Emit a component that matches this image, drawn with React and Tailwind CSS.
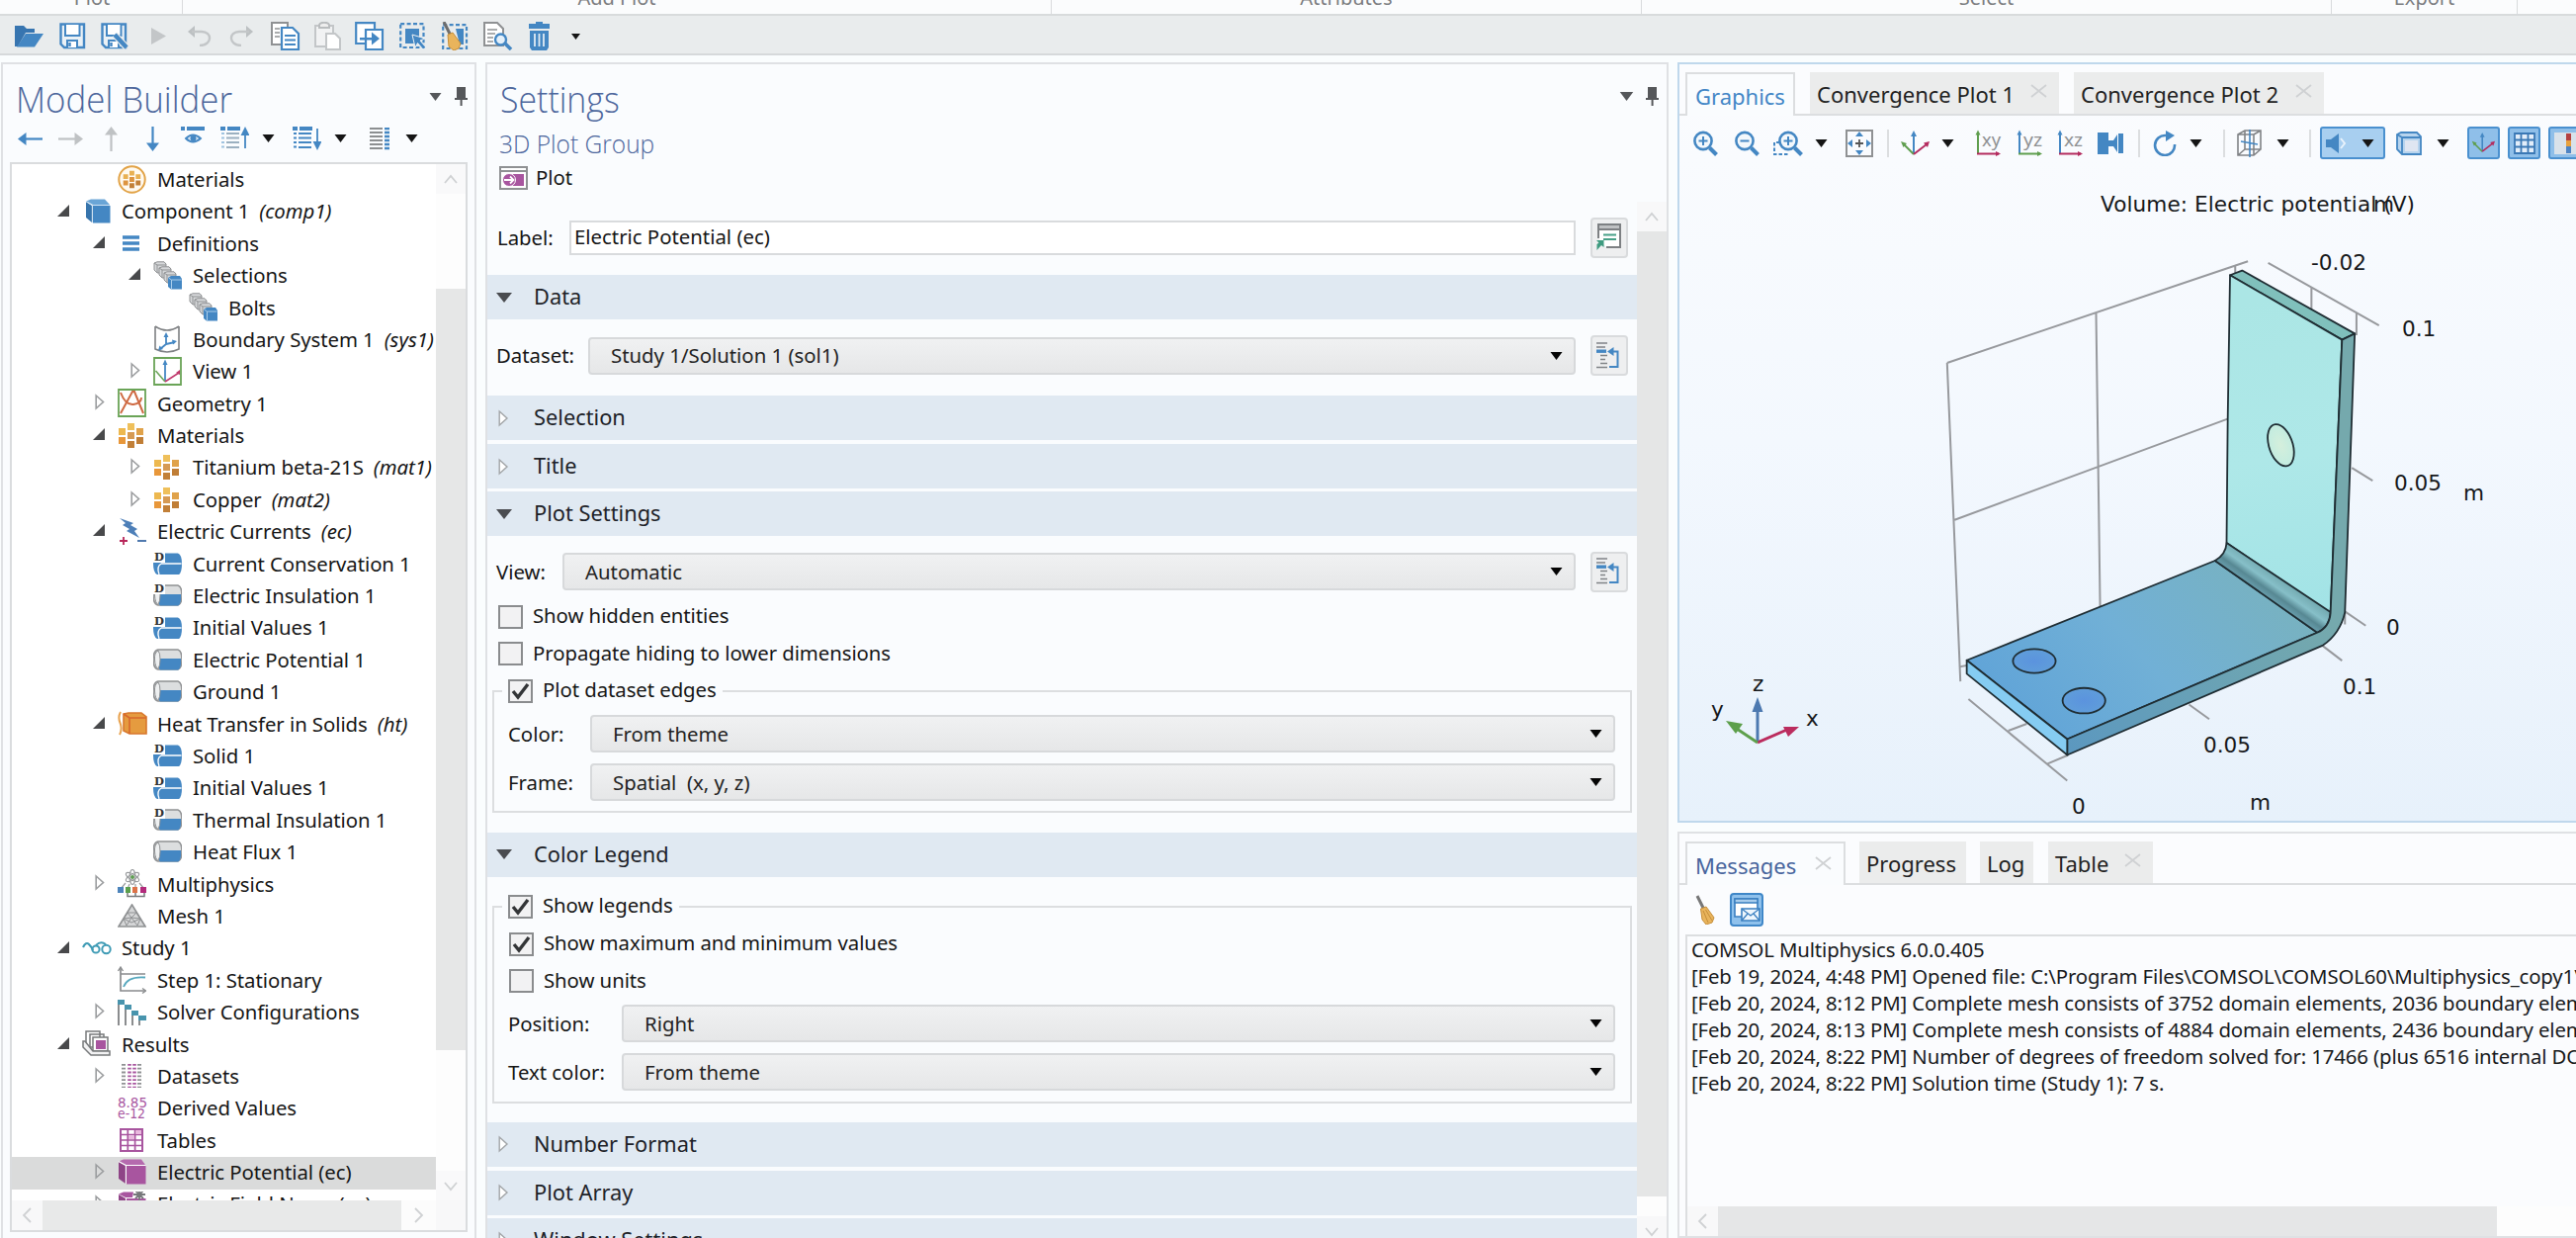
import React from "react";

const BLUE = "#4487c3";
const GRAY = "#8f9193";
const PURPLE = "#a8559f";

/* ---------- drawing helpers ---------- */

function Ic({ w, h = w, vw = w, vh = h, children, className = "" }) {
  return (
    <svg
      width={w}
      height={h}
      viewBox={`0 0 ${vw} ${vh}`}
      fill="none"
      className={"block shrink-0 " + className}
    >
      {children}
    </svg>
  );
}

function Caret({ className = "", w = 13, h = 8, color = "#151515" }) {
  return (
    <Ic w={w} h={h} vw={12} vh={8} className={className}>
      <path d="M0 0H12L6 8Z" fill={color} />
    </Ic>
  );
}

function Pin() {
  return (
    <Ic w={13} h={19}>
      <path d="M2 0H11V11H13V13H7.6V19H5.6V13H0V11H2Z" fill="#55575a" />
    </Ic>
  );
}

function Broom({ w = 20, h = 30 }) {
  return (
    <Ic w={w} h={h} vw={20} vh={30}>
      <path d="M2 1L9 15" stroke="#777" strokeWidth="3" />
      <path d="M5.5 14L11 12L19 23L17 28L11 30L7 25Z" fill="#e9b45c" stroke="#c58e3a" />
      <path d="M8 16L13 28M10.5 15L17 26" stroke="#c58e3a" strokeWidth="1" />
    </Ic>
  );
}

/* ---------- top toolbar ---------- */

const Floppy = ({ pen }) => (
  <Ic w={28} h={27}>
    <path d="M1.5 1.5H25V25H5L1.5 21.5Z" stroke={BLUE} strokeWidth="2.4" fill="#eaf1f6" />
    <path d="M6 2V13H20.5V2" stroke={BLUE} strokeWidth="2" fill="#fff" />
    <path d="M8 25V18H18V25" stroke={BLUE} strokeWidth="2" fill="#fff" />
    <path d="M10.5 20V24" stroke={BLUE} strokeWidth="2.5" />
    {pen && <path d="M14 12L26 25" stroke="#e9ecec" strokeWidth="7" />}
    {pen && <path d="M14 12L26 25" stroke={BLUE} strokeWidth="4.5" />}
  </Ic>
);

const MAIN_TOOLS = [
  ["w-[45px]", <Ic w={29} h={23}><path d="M0 22V1H9L12 4H20V8H11L3 22Z" fill="#3775b0" /><path d="M11 9H29L20 22.5H2Z" fill={BLUE} /></Ic>],
  ["w-[42px]", <Floppy />],
  ["w-[51px]", <Floppy pen />],
  ["w-[36px]", <Ic w={15} h={17}><path d="M0 0L15 8.5L0 17Z" fill="#c3c6c8" /></Ic>],
  ["w-[43px]", <Ic w={25} h={21}><path d="M8 0L1 6L8 12" fill="#bcc0c2" /><path d="M5 6H15C26 6 26 20 13 20" stroke="#c3c6c8" strokeWidth="2.4" /></Ic>],
  ["w-[42px]", <Ic w={25} h={21}><path d="M17 0L24 6L17 12" fill="#bcc0c2" /><path d="M20 6H10C-1 6 -1 20 12 20" stroke="#c3c6c8" strokeWidth="2.4" /></Ic>],
  ["w-[44px]", <Ic w={30} h={29}>
    <path d="M1 1H17V23H1Z" stroke={GRAY} strokeWidth="2" fill="#fff" />
    <path d="M4 7H9M4 11H9M4 15H9" stroke={GRAY} strokeWidth="1.6" />
    <path d="M11 6H22L28 12V28H11Z" stroke={BLUE} strokeWidth="2.2" fill="#fff" />
    <path d="M14 14H25M14 18.5H25M14 23H25" stroke={BLUE} strokeWidth="2" />
  </Ic>],
  ["w-[41px]", <Ic w={28} h={29}>
    <path d="M1 4H19V25H1Z" stroke="#c3c6c8" strokeWidth="2" fill="#f1f2f3" />
    <path d="M5 6V3C6 0 14 0 15 3V6Z" stroke="#b9bcbe" strokeWidth="2" fill="#eee" />
    <path d="M12 12H21L26 17V28H12Z" stroke="#c3c6c8" strokeWidth="2" fill="#fff" />
  </Ic>],
  ["w-[45px]", <Ic w={30} h={29}>
    <path d="M1.2 1.2H20V22H1.2Z" stroke={BLUE} strokeWidth="2.2" fill="#fff" />
    <path d="M11 8H28V28H11Z" stroke={BLUE} strokeWidth="2.2" fill="#fff" />
    <path d="M5 16H17V10.5L25 17L17 23.5V18.5H5Z" fill={BLUE} />
  </Ic>],
  ["w-[43px]", <Ic w={27} h={27}>
    <path d="M1.2 1.2H24.5V25H1.2Z" stroke={BLUE} strokeWidth="2.2" strokeDasharray="4 2.4" />
    <path d="M6 6H20V21H6Z" fill={BLUE} />
    <path d="M13 12L26 16L21 18L27 25L24 27L18.5 20.5L16 25Z" fill={BLUE} stroke="#eef2f4" />
  </Ic>],
  ["w-[42px]", <Ic w={27} h={29}>
    <path d="M1.2 3.2H25V27H1.2Z" stroke={BLUE} strokeWidth="2.2" strokeDasharray="4 2.4" />
    <path d="M14 7H22V23H18Z" fill={BLUE} />
    <path d="M2 0L9 14" stroke="#6d6d6d" strokeWidth="3" />
    <path d="M6 13L11 11L19 22L17 27L12 29L7 25Z" fill="#e9b45c" stroke="#c58e3a" />
  </Ic>],
  ["w-[46px]", <Ic w={30} h={29}>
    <path d="M1 1H14L20 7V24H1Z" stroke={GRAY} strokeWidth="2" fill="#fff" />
    <path d="M4 8H14M4 12H12M4 16H10M4 20H10" stroke={GRAY} strokeWidth="1.6" />
    <circle cx="17.5" cy="18" r="5.5" stroke={BLUE} strokeWidth="2.4" fill="#e4f0fa" />
    <path d="M22 22L28 28" stroke={BLUE} strokeWidth="3.6" />
  </Ic>],
  ["w-[43px]", <Ic w={21} h={29}>
    <path d="M0 2H7V0H14V2H21V7H0Z" fill={BLUE} />
    <path d="M1 9H20V26L18 29H3L1 26Z" fill={BLUE} />
    <path d="M6 12V25M10.5 12V25M15 12V25" stroke="#dfeaf3" strokeWidth="1.8" />
  </Ic>],
  ["w-[20px]", <Caret w={9} h={6} />],
];

const RIBBON = [
  ["w-[183px]", "Plot"],
  ["w-[879px]", "Add Plot"],
  ["w-[597px]", "Attributes"],
  ["w-[698px]", "Select"],
  ["w-[188px]", "Export"],
];

function Ribbon() {
  return (
    <div className="flex h-[16px] shrink-0 items-end border-b-2 border-[#d8dbdc] bg-[#fbfcfd] pl-[2px]">
      {RIBBON.map(([w, t]) => (
        <div key={t} className={"relative flex h-full justify-center border-r border-[#d9dbdd] " + w}>
          <span className="absolute -top-[16px] text-[20px] leading-[28px] text-[#7b7d80]">{t}</span>
        </div>
      ))}
    </div>
  );
}

/* ---------- model tree ---------- */

function Cyl({ d, half }) {
  return (
    <Ic w={29} h={24}>
      {half ? (
        <>
          <path d="M5 2H25Q29 3 29 12Q29 21 25 22H5Q0 21 0 12Q0 3 5 2Z" fill="#dcdedf" stroke={GRAY} strokeWidth="1.6" />
          <path d="M6 11H28V17Q27 22 25 22.5H7Q4 20 6 11Z" fill={BLUE} />
          <path d="M5 3Q1 5 1.5 12Q2 20 5 21.5Q7 18 7 12Q7 5 5 3Z" fill="#eef0f1" stroke={GRAY} strokeWidth="1" />
        </>
      ) : (
        <>
          <path d="M5 1.5H25Q29 3 29 12Q29 21 26 23H4Q0 21 0 12Q0 3 5 1.5Z" fill={BLUE} />
          <path d="M8 12H28.5M8 12Q3 15 6 23" stroke="#fff" strokeWidth="1.3" />
        </>
      )}
      {d && (
        <>
          <path d="M0 0H12V11H0Z" fill="#fff" />
          <text x="1" y="9" fontSize="11.5" fontWeight="bold" fill="#333" className="font-['DejaVu_Serif',serif]">D</text>
        </>
      )}
    </Ic>
  );
}

const Cubelet = ({ fill, side, top }) => (
  <Ic w={29} h={26}>
    <path d="M1 3L8 7V25L1 20Z" fill={side} />
    <path d="M1 2.5L6 0.5H24L28 6H8Z" fill={top} />
    <path d="M9 7H28.5V25.5H9Z" fill={fill} />
    <path d="M8.4 25V6.5H28.4M8.4 6.5L1 2.6" stroke="#fff" strokeWidth="1.1" />
  </Ic>
);

function MatBlocks({ s = 27 }) {
  return (
    <Ic w={s} h={s} vw={27} vh={27}>
      <path d="M10 1H17V8H10Z" fill="#efc05b" />
      <path d="M1 6H8V13H1Z" fill="#edb84f" />
      <path d="M19 6H26V13H19Z" fill="#e0a24a" />
      <path d="M10 10H17V17H10Z" fill="#d69a53" />
      <path d="M1 15H8V22H1Z" fill="#e8973a" />
      <path d="M19 15H26V22H19Z" fill="#c07e36" />
      <path d="M10 19H17V26H10Z" fill="#c28038" />
    </Ic>
  );
}

const SelBoxes = () => (
  <Ic w={29} h={29}>
    {[[0, 0], [5, 5], [10, 10]].map(([x, y]) => (
      <g key={x} transform={`translate(${x} ${y})`}>
        <path d="M1 2L4 0.8H11L13 3V12H4L1 9Z" fill="#d6d8da" stroke={GRAY} strokeWidth="1" />
        <path d="M4 12V4H13M4 4L1 2" stroke={GRAY} strokeWidth="1" />
      </g>
    ))}
    <path d="M15 17L18 15H27L29 18V28.5H18L15 26Z" fill={BLUE} />
    <path d="M18.5 28V19H28.6M18.5 19L15.5 17" stroke="#a9cdea" strokeWidth="1" />
  </Ic>
);

const ICONS = {
  matCircle: (
    <Ic w={29} h={29}>
      <circle cx="14.5" cy="14.5" r="13.2" stroke="#e2a347" strokeWidth="2" fill="#fffaf1" />
      <g transform="translate(5 5) scale(.7)">
        <path d="M10 1H17V8H10ZM1 6H8V13H1ZM19 6H26V13H19Z" fill="#e8b052" />
        <path d="M10 10H17V17H10ZM1 15H8V22H1Z" fill="#dd9440" />
        <path d="M19 15H26V22H19ZM10 19H17V26H10Z" fill="#c28038" />
      </g>
    </Ic>
  ),
  comp: (
    <Ic w={26} h={25} className="ml-[3px]">
      <path d="M1 3L7 7V24L1 19Z" fill="#3674ac" />
      <path d="M1 2.5L6 0.5H20L25 6H8Z" fill="#6aa5d6" />
      <path d="M8 7H25.5V24.5H8Z" fill={BLUE} />
      <path d="M7.4 24V6.5H25M7.4 6.5L1 2.6" stroke="#cfe2f2" strokeWidth="1.1" />
    </Ic>
  ),
  defs: <Ic w={17} h={16} className="ml-[5px]"><path d="M0 2H17M0 8H17M0 14H17" stroke={BLUE} strokeWidth="3.6" /></Ic>,
  sel: <SelBoxes />,
  bsys: (
    <Ic w={28} h={28}>
      <path d="M2 1V24Q14 30 26 24V1M2 1Q14 9 26 1" stroke="#7e8083" strokeWidth="1.6" />
      <path d="M13 9V19L7 24M13 19L22 17" stroke={BLUE} strokeWidth="1.8" />
      <path d="M13 7L10.5 12H15.5ZM24 16L19 14.5L20 19.5ZM5 25.5L6.5 20.5L10 24Z" fill={BLUE} />
    </Ic>
  ),
  view: (
    <Ic w={29} h={29}>
      <path d="M1 1H28V28H1Z" stroke="#6aa457" strokeWidth="1.8" />
      <path d="M12 5V25" stroke={BLUE} strokeWidth="1.8" /><path d="M12 2.5L9.5 8H14.5Z" fill={BLUE} />
      <path d="M12 25L2.5 14" stroke="#6aa457" strokeWidth="1.5" />
      <path d="M12 25L26 16" stroke="#c0386c" strokeWidth="1.5" /><path d="M27 13V18L23 16Z" fill="#c0386c" />
    </Ic>
  ),
  geo: (
    <Ic w={29} h={29}>
      <path d="M1 1H28V28H1Z" stroke="#6aa457" strokeWidth="1.8" />
      <path d="M3 25L15 3H17L26 25M3 4Q8 17 16 16T24 9" stroke="#cf6a43" strokeWidth="2" />
    </Ic>
  ),
  mat: <MatBlocks />,
  ec: (
    <Ic w={29} h={28}>
      <path d="M2 1L16 6L13 8L20 12L17 14L22 21L9 14L12 12L5 8L8 6Z" fill="#4d7fb8" />
      <path d="M2 24H10M6 20V28" stroke="#b8275a" strokeWidth="1.8" />
      <path d="M20 24H29" stroke="#3d6aa5" strokeWidth="1.8" />
    </Ic>
  ),
  dFull: <Cyl d />,
  dHalf: <Cyl d half />,
  half: <Cyl half />,
  heat: (
    <Ic w={30} h={26}>
      <path d="M3 1Q0 6 2.5 12T2 24" stroke="#e8a24e" strokeWidth="2" />
      <path d="M6 3L11 2H24L29 6V23H12L6 20Z" fill="#e59b3f" stroke="#d8772c" strokeWidth="1.6" />
      <path d="M12 23V7H29M12 7L6 3" stroke="#d8672c" strokeWidth="1.6" />
    </Ic>
  ),
  multi: (
    <Ic w={29} h={29}>
      <g stroke="#9a9c9e" strokeWidth="1.2">
        <ellipse cx="15" cy="8" rx="3" ry="7.5" />
        <ellipse cx="15" cy="8" rx="3" ry="7.5" transform="rotate(60 15 8)" />
        <ellipse cx="15" cy="8" rx="3" ry="7.5" transform="rotate(120 15 8)" />
        <path d="M8 14L3 20M12 15L10 20M18 15L18 20M22 14L27 20" />
        <path d="M10 24V27.5H27V24M18 24V27" stroke="#77797b" strokeWidth="1.5" />
      </g>
      <circle cx="15" cy="8" r="2" fill="#5e9c51" />
      <path d="M0 18H6V24H0Z" fill="#4d84bb" />
      <path d="M8 18H13V24H8Z" fill="#5b9f4c" />
      <path d="M15 18H20V24H15Z" fill="#dd7348" />
      <path d="M23 18H29V24H23Z" fill="#b32a7c" />
    </Ic>
  ),
  mesh: (
    <Ic w={29} h={24}>
      <path d="M14.5 1L28 23H1Z" fill="#d5d6d7" stroke={GRAY} strokeWidth="1.6" />
      <path d="M10 9L19 9L14 14ZM6 15L14 14L23 15L20 22L14 14L9 22ZM10 9L6 15L14 19L23 15L19 9" stroke={GRAY} strokeWidth="1" />
    </Ic>
  ),
  study: (
    <Ic w={30} h={15}>
      <path d="M1 7Q4 1 7 4T11 10" stroke="#3f9bb5" strokeWidth="2.2" />
      <circle cx="14" cy="9" r="3.6" stroke="#3f9bb5" strokeWidth="2" />
      <circle cx="24.5" cy="9" r="4.2" stroke="#3f9bb5" strokeWidth="2" />
      <path d="M14 5Q19 0 24 4" stroke="#3f9bb5" strokeWidth="1.8" />
    </Ic>
  ),
  step: (
    <Ic w={29} h={28}>
      <path d="M3 2V25H28M3 8H28" stroke="#898b8d" strokeWidth="1.7" />
      <path d="M0.5 5L3 1L5.5 5M25 22.5L28.5 25L25 27.5" stroke="#898b8d" strokeWidth="1.3" />
      <path d="M6 21Q10 10 28 11.5" stroke="#57a8be" strokeWidth="1.8" />
    </Ic>
  ),
  solver: (
    <Ic w={29} h={27}>
      <path d="M1 2V27M8 6V27M15 12V27M22 17V27" stroke="#77797b" strokeWidth="1.7" />
      <path d="M0 1H7V6H0ZM7 6H14V11H7ZM14 12H21V17H14ZM21 17H29V22H21Z" fill="#4894ad" />
    </Ic>
  ),
  results: (
    <Ic w={29} h={27}>
      <path d="M4 1H18V17H4ZM8 4H22V20H8Z" stroke="#77797b" strokeWidth="1.5" fill="#fff" />
      <path d="M11 7H26V21H11Z" stroke="#77797b" strokeWidth="1.5" fill="#fff" />
      <path d="M14 10H24V19H14Z" fill={PURPLE} />
      <path d="M1 11V17L9 25H28V21H11L3 11Z" fill="#f2f2f3" stroke="#77797b" strokeWidth="1.5" />
    </Ic>
  ),
  datasets: (
    <Ic w={21} h={24} className="ml-[4px]">
      <path d="M2 0V24M18 0V24" stroke={GRAY} strokeWidth="4" strokeDasharray="1.8 2" />
      <path d="M8 0V24M13 0V24" stroke={PURPLE} strokeWidth="3.6" strokeDasharray="1.8 2" />
    </Ic>
  ),
  derived: (
    <Ic w={30} h={24}>
      <text x="0" y="10.5" fontSize="13.5" textLength="30" lengthAdjust="spacingAndGlyphs" fill={PURPLE} className="font-['DejaVu_Sans',sans-serif]">8.85</text>
      <text x="0" y="22" fontSize="13.5" textLength="28" lengthAdjust="spacingAndGlyphs" fill={PURPLE} className="font-['DejaVu_Sans',sans-serif]">e-12</text>
    </Ic>
  ),
  tables: (
    <Ic w={24} h={24} className="ml-[2px]">
      <path d="M1 1H23V23H1Z" fill="#fff" stroke={PURPLE} strokeWidth="2" />
      <path d="M1 6.5H23M1 12H23M1 17.5H23M8.3 1V23M15.6 1V23" stroke={PURPLE} strokeWidth="1.7" />
      <path d="M16.5 2H22V6H16.5ZM9 7.5H15V11H9Z" fill="#e9b8de" />
    </Ic>
  ),
  plotCube: <Cubelet fill={PURPLE} side="#8f4487" top="#b56aae" />,
  plotCubeStar: (
    <Ic w={29} h={26}>
      <path d="M1 3L8 7V25L1 20Z" fill="#8f4487" />
      <path d="M1 2.5L6 0.5H16L15 6H8Z" fill={PURPLE} />
      <path d="M9 7H28.5V25.5H9Z" fill={PURPLE} />
      <path d="M22 -3V9M16 3H28M18 -1L26 7M26 -1L18 7" stroke="#77797b" strokeWidth="1.8" />
    </Ic>
  ),
};

// [level, open state ("o" open, "c" closed, "" leaf), icon, label, tag]
const TREE = [
  [2, "", "matCircle", "Materials"],
  [1, "o", "comp", "Component 1", "(comp1)"],
  [2, "o", "defs", "Definitions"],
  [3, "o", "sel", "Selections"],
  [4, "", "sel", "Bolts"],
  [3, "", "bsys", "Boundary System 1", "(sys1)"],
  [3, "c", "view", "View 1"],
  [2, "c", "geo", "Geometry 1"],
  [2, "o", "mat", "Materials"],
  [3, "c", "mat", "Titanium beta-21S", "(mat1)"],
  [3, "c", "mat", "Copper", "(mat2)"],
  [2, "o", "ec", "Electric Currents", "(ec)"],
  [3, "", "dFull", "Current Conservation 1"],
  [3, "", "dHalf", "Electric Insulation 1"],
  [3, "", "dFull", "Initial Values 1"],
  [3, "", "half", "Electric Potential 1"],
  [3, "", "half", "Ground 1"],
  [2, "o", "heat", "Heat Transfer in Solids", "(ht)"],
  [3, "", "dFull", "Solid 1"],
  [3, "", "dFull", "Initial Values 1"],
  [3, "", "dHalf", "Thermal Insulation 1"],
  [3, "", "half", "Heat Flux 1"],
  [2, "c", "multi", "Multiphysics"],
  [2, "", "mesh", "Mesh 1"],
  [1, "o", "study", "Study 1"],
  [2, "", "step", "Step 1: Stationary"],
  [2, "c", "solver", "Solver Configurations"],
  [1, "o", "results", "Results"],
  [2, "c", "datasets", "Datasets"],
  [2, "", "derived", "Derived Values"],
  [2, "", "tables", "Tables"],
  [2, "c", "plotCube", "Electric Potential (ec)", null, true],
  [2, "c", "plotCubeStar", "Electric Field Norm (ec)"],
];

const INDENT = { 1: "pl-[46px]", 2: "pl-[82px]", 3: "pl-[118px]", 4: "pl-[154px]" };

function TreeRow({ level, state, icon, label, tag, selected }) {
  return (
    <div className={"flex h-[32.4px] shrink-0 items-center pb-[2px] whitespace-nowrap " + INDENT[level] + (selected ? " bg-[#dadbdb]" : "")}>
      <span className="flex w-[12px] shrink-0 justify-end pb-[2px]">
        {state === "o" && <Ic w={12} h={12}><path d="M12 0V12H0Z" fill="#48494b" /></Ic>}
        {state === "c" && <Ic w={10} h={17}><path d="M1.2 2L8.5 8.5L1.2 15Z" stroke="#9b9d9f" strokeWidth="1.6" /></Ic>}
      </span>
      <span className="ml-[13px] flex w-[40px] shrink-0 items-center">{ICONS[icon]}</span>
      <span className="tracking-[-0.06px]">{label}</span>
      {tag && <span className="ml-[10px] italic">{tag}</span>}
    </div>
  );
}

function Chev({ dir }) {
  const d = { up: "M2 9L8 2L14 9", down: "M2 2L8 9L14 2", left: "M9 1L2 8L9 15", right: "M2 1L9 8L2 15" }[dir];
  const v = dir === "up" || dir === "down";
  return <Ic w={v ? 16 : 11} h={v ? 11 : 16}><path d={d} stroke="#cfd1d3" strokeWidth="1.8" /></Ic>;
}

const TreeList = ({ down }) => (
  <Ic w={29} h={24}>
    <path d="M0 2H5M7 2H20" stroke={BLUE} strokeWidth="4" />
    <path d="M1 7H4M1 11.5H4M1 16H4M1 20.5H4" stroke={down ? BLUE : "#9fc3e0"} strokeWidth="2" />
    <path d="M6 7H19M6 11.5H19M6 16H19M6 21H19" stroke={down ? BLUE : "#9bb0c0"} strokeWidth="2" />
    {down ? <path d="M25 2V19M22 16H28L25 22Z" fill={BLUE} stroke={BLUE} strokeWidth="1.8" /> : <path d="M25 22V5M22 8H28L25 2Z" fill={BLUE} stroke={BLUE} strokeWidth="1.8" />}
  </Ic>
);

const HArrow = ({ color, flip }) => (
  <Ic w={25} h={13} className={flip ? "rotate-180" : ""}>
    <path d="M6 6.5H25" stroke={color} strokeWidth="2.2" />
    <path d="M0 6.5L8.5 0V13Z" fill={color} />
  </Ic>
);
const VArrow = ({ color, flip }) => (
  <Ic w={13} h={25} className={flip ? "rotate-180" : ""}>
    <path d="M6.5 6V25" stroke={color} strokeWidth="2.2" />
    <path d="M6.5 0L13 8.5H0Z" fill={color} />
  </Ic>
);

const MB_TOOLS = [
  ["w-[41px]", <HArrow color={BLUE} />],
  ["w-[47px]", <HArrow color="#bfc2c4" flip />],
  ["w-[42px]", <VArrow color="#bfc2c4" />],
  ["w-[35px]", <VArrow color={BLUE} flip />],
  ["w-[40px]", <Ic w={24} h={18} className="-mt-[6px]"><path d="M0 2H4M6 2H24" stroke={BLUE} strokeWidth="4" /><path d="M5 12Q12 5 20 12Q12 19 5 12Z" stroke={BLUE} strokeWidth="1.8" fill="#dbe9f5" /><circle cx="12.5" cy="12" r="3" fill={BLUE} /></Ic>],
  ["w-[42px]", <TreeList />],
  ["w-[31px]", <Caret />],
  ["w-[42px]", <TreeList down />],
  ["w-[36px]", <Caret />],
  ["w-[36px]", <Ic w={20} h={23}><path d="M0 1H13M0 5H13M0 9H13M0 13H13M0 17H13M0 21H13" stroke="#8c8f91" strokeWidth="2.2" /><path d="M15 1H20M15 5H20M15 9H20M15 13H20M15 17H20M15 21H20" stroke={BLUE} strokeWidth="2.4" /></Ic>],
  ["w-[16px]", <Caret />],
];

function ModelBuilder() {
  return (
    <section className="flex w-[481px] shrink-0 flex-col border-2 border-b-0 border-[#dfe1e4] bg-[#fafcfe]">
      <div className="flex h-[60px] items-center pt-[8px] pr-[7px] pl-[13px]">
        <h1 className="w-[340px] origin-left scale-x-[0.942] font-['Open_Sans','Noto_Sans',sans-serif] text-[37px] leading-none font-light whitespace-nowrap text-[#4c669c]">Model Builder</h1>
        <div className="-mt-[3px] ml-auto flex items-center gap-[12px]"><Caret w={15} h={8} color="#55575a" /><Pin /></div>
      </div>
      <div className="flex h-[30px] items-center pl-[15px]">
        {MB_TOOLS.map(([w, n], i) => <span key={i} className={"flex shrink-0 items-center " + w}>{n}</span>)}
      </div>
      <div className="mx-[7px] mt-[9px] flex h-[1082px] flex-col border-2 border-[#dadcde] bg-white">
        <div className="flex min-h-0 flex-1">
          <div className="flex w-[429px] shrink-0 flex-col overflow-hidden">
            {TREE.map(([level, state, icon, label, tag, selected], i) => (
              <TreeRow key={i} {...{ level, state, icon, label, tag, selected }} />
            ))}
          </div>
          <div className="flex flex-1 flex-col bg-[#fdfdfd]">
            <div className="flex h-[30px] items-center justify-center bg-[#f9f9fa]"><Chev dir="up" /></div>
            <div className="mt-[96px] h-[770px] bg-[#e6e7e7]" />
            <div className="mt-auto flex h-[30px] items-center justify-center bg-[#f9f9fa]"><Chev dir="down" /></div>
          </div>
        </div>
        <div className="flex h-[30px] bg-[#f8f8f9]">
          <div className="flex w-[31px] items-center justify-center"><Chev dir="left" /></div>
          <div className="w-[363px] bg-[#e8e9e9]" />
          <div className="flex w-[35px] items-center justify-center bg-[#fcfcfc]"><Chev dir="right" /></div>
        </div>
      </div>
    </section>
  );
}

/* ---------- settings ---------- */

function SectionBar({ open, title, className = "" }) {
  return (
    <div className={"flex h-[45px] shrink-0 items-center bg-[#e0e9f2] pl-[9px] text-[21.8px] text-[#1d2228] " + className}>
      <span className="flex w-[38px]">
        {open
          ? <Ic w={16} h={10}><path d="M0 0H16L8 10Z" fill="#4a4c50" /></Ic>
          : <Ic w={11} h={18} className="ml-[2px]"><path d="M1.2 2L9 9L1.2 16Z" stroke="#a3a6a9" strokeWidth="1.4" fill="#fff" /></Ic>}
      </span>
      {title}
    </div>
  );
}

function Combo({ text, className = "" }) {
  return (
    <div className={"flex h-[38px] shrink-0 items-center justify-between rounded-[4px] border-2 border-[#d7d9db] bg-linear-to-b from-[#f0f1f2] to-[#e6e7e8] pr-[11px] pl-[21px] text-[#222] " + className}>
      <span className="whitespace-pre">{text}</span>
      <Caret color="#050505" w={13} h={8} />
    </div>
  );
}

function Check({ on }) {
  return (
    <span className="flex h-[24px] w-[25px] shrink-0 items-center justify-center border-2 border-[#8a8c8e] bg-[#f2f2f3]">
      {on && <Ic w={19} h={18}><path d="M2 9L7 15L17 2" stroke="#333537" strokeWidth="3.4" /></Ic>}
    </span>
  );
}

function CheckRow({ on, label, className = "" }) {
  return (
    <label className={"flex h-[37.6px] shrink-0 items-center gap-[10px] " + className}>
      <Check on={on} />
      <span className="-mt-[3px] tracking-[-0.06px]">{label}</span>
    </label>
  );
}

function Group({ legend, className, children }) {
  return (
    <fieldset className={"mr-[5px] ml-[5px] shrink-0 border-2 border-[#dcdee0] pr-[15px] pl-[14px] " + className}>
      <legend className="-ml-[6px] flex h-[24px] items-center gap-[10px] pr-[6px] pl-[6px]">
        <Check on />
        <span className="-mt-[3px] tracking-[-0.06px]">{legend}</span>
      </legend>
      {children}
    </fieldset>
  );
}

function SideButton({ kind }) {
  return (
    <button className="ml-[15px] flex h-[41px] w-[38px] shrink-0 items-center justify-center rounded-[4px] border-2 border-[#d9dbdd] bg-[#eeeff0]">
      {kind === "label" ? (
        <Ic w={28} h={28} className="-mt-[4px] -ml-[2px]">
          <path d="M4 16V2H26V25H12" stroke="#7d8083" strokeWidth="2" fill="#fff" />
          <path d="M4 2H26V7H4Z" fill="#bfc1c3" stroke="#7d8083" strokeWidth="2" />
          <path d="M9 12.5H22M9 17H22" stroke="#48a087" strokeWidth="1.9" />
          <path d="M2 18H9.500V25L7 23L2.500 28V22L4.500 20.500Z" fill="#3f9b80" />
        </Ic>
      ) : (
        <Ic w={24} h={28} className="-mt-[2px] -ml-[2px]">
          <path d="M0 2H11M0 6H9M4 14.500H11M4 18.500H9M4 22.500H11M0 26.500H11" stroke="#808386" strokeWidth="1.7" />
          <path d="M0 10.200H10" stroke={BLUE} strokeWidth="3.400" />
          <path d="M14 10.500H21.500V26H13" stroke={BLUE} strokeWidth="2" />
          <path d="M11 10.500L17.500 6V15Z" fill={BLUE} />
        </Ic>
      )}
    </button>
  );
}

function Settings() {
  return (
    <section className="ml-[9px] flex w-[1197px] shrink-0 flex-col border-2 border-b-0 border-[#dfe1e4] bg-[#fafcfe]">
      <div className="flex h-[66px] shrink-0 items-center pt-[2px] pr-[8px] pl-[13px]">
        <h1 className="w-[200px] origin-left scale-x-[0.915] font-['Open_Sans','Noto_Sans',sans-serif] text-[37px] leading-none font-light text-[#4c669c]">Settings</h1>
        <div className="ml-auto flex items-center gap-[12px] pb-[4px]"><Caret w={15} h={9} color="#55575a" /><Pin /></div>
      </div>
      <h2 className="flex h-[29px] w-[300px] shrink-0 origin-left scale-x-[0.925] items-center pl-[13px] font-['Open_Sans','Noto_Sans',sans-serif] text-[26.5px] font-light text-[#4c669c]">3D Plot Group</h2>
      <div className="flex h-[39px] shrink-0 items-center gap-[8px] pl-[12px]">
        <Ic w={29} h={24}>
          <path d="M1 1H28V23H1Z" fill="#fff" stroke={GRAY} strokeWidth="2" />
          <path d="M1 5H28" stroke={GRAY} strokeWidth="2" />
          <path d="M13 8H25V20H13Z" fill={PURPLE} />
          <circle cx="10" cy="14" r="6.500" fill={PURPLE} stroke="#fff" />
          <path d="M5 14H14M11 10.500L14.500 14L11 17.500" stroke="#fff" strokeWidth="1.800" />
        </Ic>
        <span>Plot</span>
      </div>
      <div className="flex min-h-0 flex-1 overflow-hidden pt-[5px]">
        <div className="flex w-[1163px] shrink-0 flex-col">
          <div className="flex h-[74px] shrink-0 items-center pb-px pl-[10px]">
            <span className="w-[73px]">Label:</span>
            <div className="flex h-[35px] w-[1018px] items-center border-2 border-[#d9dbdd] bg-white pb-[3px] pl-[3px]">Electric Potential (ec)</div>
            <SideButton kind="label" />
          </div>
          <SectionBar open title="Data" />
          <div className="flex h-[77px] shrink-0 items-center pb-[4px] pl-[9px]">
            <span className="w-[93px]">Dataset:</span>
            <Combo text="Study 1/Solution 1 (sol1)" className="w-[999px]" />
            <SideButton />
          </div>
          <SectionBar title="Selection" />
          <SectionBar title="Title" className="mt-[4px]" />
          <SectionBar open title="Plot Settings" className="mt-[3px]" />
          <div className="mt-[16px] flex h-[40px] shrink-0 items-center pl-[9px]">
            <span className="w-[67px]">View:</span>
            <Combo text="Automatic" className="w-[1025px]" />
            <SideButton />
          </div>
          <CheckRow label="Show hidden entities" className="mt-[7px] pl-[11px]" />
          <CheckRow label="Propagate hiding to lower dimensions" className="pl-[11px]" />
          <Group legend="Plot dataset edges" className="mt-[6.800px] h-[135px]">
            <div className="mt-[12px] flex items-center"><span className="w-[83px]">Color:</span><Combo text="From theme" className="w-[1037px]" /></div>
            <div className="mt-[11px] flex items-center"><span className="w-[83px]">Frame:</span><Combo text="Spatial  (x, y, z)" className="w-[1037px]" /></div>
          </Group>
          <SectionBar open title="Color Legend" className="mt-[20px]" />
          <Group legend="Show legends" className="mt-[18px] h-[211px]">
            <CheckRow on label="Show maximum and minimum values" className="mt-[7px] pl-px" />
            <CheckRow label="Show units" className="pl-px" />
            <div className="mt-[5px] flex items-center"><span className="w-[115px]">Position:</span><Combo text="Right" className="w-[1005px]" /></div>
            <div className="mt-[11px] flex items-center"><span className="w-[115px]">Text color:</span><Combo text="From theme" className="w-[1005px]" /></div>
          </Group>
          <SectionBar title="Number Format" className="mt-[19px]" />
          <SectionBar title="Plot Array" className="mt-[4px]" />
          <SectionBar title="Window Settings" className="mt-[3px]" />
        </div>
        <div className="flex flex-1 flex-col bg-[#fdfdfd]">
          <div className="flex h-[30px] shrink-0 items-center justify-center bg-[#f8f8f9]"><Chev dir="up" /></div>
          <div className="h-[976px] shrink-0 bg-[#e5e6e6]" />
          <div className="mt-[20px] flex h-[30px] shrink-0 items-center justify-center bg-[#f8f8f9]"><Chev dir="down" /></div>
        </div>
      </div>
    </section>
  );
}

/* ---------- graphics ---------- */

function Tab({ label, active, close, className = "", color = "" }) {
  return (
    <div
      className={
        "flex shrink-0 items-center justify-between text-[22px] " +
        (active ? "-mb-[2px] h-[44px] border-2 border-b-0 border-[#dcdee0] bg-[#fafcfe] pt-[3px] pl-[8px] " : "h-[42px] bg-[#ebecec] pt-[2px] pl-[7px] text-[#222] ") +
        color + " " + className
      }
    >
      {label}
      {close && <Ic w={17} h={14} className="mr-[12px] mb-[6px]"><path d="M1 1L16 13M16 1L1 13" stroke="#cfd1d3" strokeWidth="1.8" /></Ic>}
    </div>
  );
}

const Mag = ({ sign, box }) => (
  <Ic w={box ? 30 : 26} h={26}>
    {box && <path d="M12 12H1V24H16" stroke={BLUE} strokeWidth="2" strokeDasharray="3.5 2" />}
    <g transform={box ? "translate(4 0)" : ""}>
      <circle cx="11" cy="10.500" r="8.600" stroke={BLUE} strokeWidth="2.600" fill="#f3f8fc" />
      <path d="M17.500 17.500L24.500 24.500" stroke={BLUE} strokeWidth="4" />
      <path d={sign === "+" ? "M6.500 10.500H15.500M11 6V15" : "M6.500 10.500H15.500"} stroke={BLUE} strokeWidth="2" />
    </g>
  </Ic>
);

const Plane = ({ t, v, h }) => (
  <Ic w={27} h={27}>
    <path d="M3 3V24.500" stroke={v} strokeWidth="2" /><path d="M0.500 5.500L3 0.500L5.500 5.500Z" fill={v} />
    <path d="M2 24.500H24" stroke={h} strokeWidth="2" /><path d="M21 22L26 24.500L21 27Z" fill={h} />
    <text x="7" y="17" fontSize="18.500" textLength="19" lengthAdjust="spacingAndGlyphs" fill="#8e9092">{t}</text>
  </Ic>
);

const Sep = () => <span className="h-[28px] w-[2px] bg-[#dcdee0]" />;
const BTN = "flex h-[33px] items-center justify-center rounded-[3px] border-2 border-[#4a90cf] bg-[#8fbfe9]";

const MiniAxes = ({ s = 1 }) => (
  <Ic w={31 * s} h={26 * s} vw={31} vh={26}>
    <path d="M14 5V24" stroke={BLUE} strokeWidth="2" /><path d="M14 0L11 6H17Z" fill={BLUE} />
    <path d="M14 24L4 14" stroke="#5f9e4e" strokeWidth="2" /><path d="M1 11L7 13L3.500 17Z" fill="#5f9e4e" />
    <path d="M14 24L27 14" stroke="#b42c5f" strokeWidth="2" /><path d="M30 11L24 12.500L28 17Z" fill="#b42c5f" />
  </Ic>
);

const G_TOOLS = [
  ["w-[42px]", <Mag sign="+" />],
  ["w-[40px]", <Mag sign="-" />],
  ["w-[42px]", <Mag sign="+" box />],
  ["w-[31px]", <Caret />],
  ["w-[42px]", <Ic w={28} h={28}>
    <path d="M1 1H27V27H1Z" stroke={GRAY} strokeWidth="2" />
    <path d="M10 14H18M14 10V18" stroke="#555" strokeWidth="1.800" />
    <path d="M14 2L18 7H10ZM14 26L18 21H10ZM2 14L7 10V18ZM26 14L21 10V18Z" fill={BLUE} />
  </Ic>],
  ["w-[13px]", <Sep />],
  ["w-[42px]", <MiniAxes />],
  ["w-[34px]", <Caret />],
  ["w-[42px]", <Plane t="xy" v="#5f9e4e" h="#b42c5f" />],
  ["w-[41px]", <Plane t="yz" v={BLUE} h="#5f9e4e" />],
  ["w-[41px]", <Plane t="xz" v={BLUE} h="#b42c5f" />],
  ["w-[41px]", <Ic w={27} h={22}><path d="M0 0H11V22H0ZM11 8H16L20 2V20L16 14H11ZM21 1H26V21H21Z" fill={BLUE} /><path d="M20.500 2V20" stroke="#fff" /></Ic>],
  ["w-[15px]", <Sep />],
  ["w-[37px]", <Ic w={26} h={26}><path d="M22 14A10 10 0 1 1 13 5" stroke={BLUE} strokeWidth="2.600" /><path d="M13 0L22 5L13 11Z" fill={BLUE} /></Ic>],
  ["w-[34px]", <Caret />],
  ["w-[13px]", <Sep />],
  ["w-[41px]", <Ic w={27} h={28}>
    <path d="M2 5L9 1H25V20L18 26H2ZM2 5H18V26M18 5L25 1M9 1V20H25M2 26L9 20" stroke="#808386" strokeWidth="1.600" />
    <path d="M14 0V28M5 12L22 15" stroke={BLUE} strokeWidth="1.600" />
  </Ic>],
  ["w-[33px]", <Caret />],
  ["w-[11px]", <Sep />],
  ["w-[77px]", <span className="flex h-[33px] w-[66px] items-center gap-[14px] rounded-[3px] border-2 border-[#4a90cf] bg-[#a8cff0] pl-[4px]">
    <Ic w={22} h={22}><path d="M0 7H5L13 1V21L5 15H0Z" fill={BLUE} /><path d="M15 6L19 11L15 16" stroke="#e8f2fb" strokeWidth="2" /></Ic>
    <Caret />
  </span>],
  ["w-[41px]", <Ic w={27} h={24}>
    <path d="M1 3L5 1H21L25 5V23H6L1 18Z" fill="#b7d4ee" stroke={BLUE} strokeWidth="1.800" />
    <path d="M6 23V6H25M6 6L1 3" stroke={BLUE} strokeWidth="1.800" />
    <path d="M9 9H22V20H9Z" fill="#dfe6f2" />
  </Ic>],
  ["w-[31px]", <Caret />],
  ["w-[41px]", <span className={BTN + " w-[33px]"}><MiniAxes s={0.8} /></span>],
  ["w-[41px]", <span className={BTN + " w-[33px]"}><Ic w={22} h={22}><path d="M1 1H21V21H1ZM1 7.500H21M1 14.500H21M7.500 1V21M14.500 1V21" stroke="#3a78b5" strokeWidth="1.800" fill="#e3eefa" /></Ic></span>],
  ["w-[33px]", <span className={BTN + " w-[33px]"}><Ic w={22} h={22}>
    <path d="M0 0H22V22H0Z" fill="#d9e2ea" /><path d="M12 1H17V8H12Z" fill="#b44040" /><path d="M12 8H17V14H12Z" fill="#e8a13c" /><path d="M12 14H17V21H12Z" fill="#4d84c4" />
  </Ic></span>],
];

const AXIS_LABELS = [
  [2338, 273, "-0.02"], [2430, 340, "0.1"], [2422, 496, "0.05"], [2492, 506, "m"],
  [2414, 642, "0"], [2370, 701.500, "0.1"], [2229, 761, "0.05"], [2096, 823, "0"], [2276, 819, "m"],
  [1773, 699, "z"], [1731, 725, "y"], [1827, 734, "x"], [2401, 214, "m"],
];

function Plot3D() {
  return (
    <svg width="907" height="658" viewBox="1699 172 907 658" className="block font-['DejaVu_Sans',sans-serif]" fill="none">
      <defs>
        <linearGradient id="bottomFace" x1="520" y1="1200" x2="1040" y2="900" gradientUnits="userSpaceOnUse">
          <stop offset="0" stopColor="#5fa3d8" /><stop offset=".5" stopColor="#71b0d6" /><stop offset="1" stopColor="#78b2c0" />
        </linearGradient>
        <linearGradient id="sideFace" x1="690" y1="1350" x2="1160" y2="1050" gradientUnits="userSpaceOnUse">
          <stop offset="0" stopColor="#5c98bf" /><stop offset=".6" stopColor="#6ba3b4" /><stop offset="1" stopColor="#75a9ad" />
        </linearGradient>
        <linearGradient id="wall" x1="970" y1="200" x2="1150" y2="1000" gradientUnits="userSpaceOnUse">
          <stop offset="0" stopColor="#abe6e5" /><stop offset=".5" stopColor="#aee8e8" /><stop offset="1" stopColor="#a2e3e6" />
        </linearGradient>
        <linearGradient id="bend" x1="1031" y1="960" x2="1068" y2="925" gradientUnits="userSpaceOnUse">
          <stop offset="0" stopColor="#699fae" /><stop offset=".3" stopColor="#578893" /><stop offset=".6" stopColor="#86bfc8" /><stop offset="1" stopColor="#74abb2" />
        </linearGradient>
        <radialGradient id="bolt"><stop offset="0" stopColor="#5b93de" /><stop offset="1" stopColor="#5f9dda" /></radialGradient>
        <radialGradient id="bolt2"><stop offset="0" stopColor="#d5efdc" /><stop offset="1" stopColor="#c3ece0" /></radialGradient>
      </defs>
      <g transform="translate(1690 230) scale(0.58411 0.38911)">
        <g stroke="#97999d" strokeWidth="2" className="[&>*]:[vector-effect:non-scaling-stroke]">
          <path d="M479 352L1000 88M479 352L502 1180M737 222L744 985M492 760L966 497M978 97V118M1035 92L1227 255M1110 155V212M1188 220V280" />
          <path d="M1180 625L1216 658M1168 998L1204 1035M1168 1000V1032M1130 1088L1163 1126M898 1240L933 1278M516 1226L687 1438M585 1308L617 1290M653 1394L689 1371M500 1142L515 1138" />
        </g>
        <g stroke="#1f2d33" strokeWidth="1.800" strokeLinejoin="round" className="[&>*]:[vector-effect:non-scaling-stroke]">
          <path d="M969 124L990 112L1185 276L1163 292Z" fill="#80c0bc" />
          <path d="M969 124L1163 292L1143 1002L963 820L965 500Z" fill="url(#wall)" />
          <path d="M513 1125L943 866L1120 1053L687 1330Z" fill="url(#bottomFace)" />
          <path d="M963 820L1143 1000Q1142 1040 1120 1053L943 866Q962 850 963 820Z" fill="url(#bend)" />
          <path d="M1163 292L1185 276L1168 1000Q1160 1055 1130 1086L687 1371V1330L1120 1053Q1141 1040 1143 1002Z" fill="url(#sideFace)" />
          <path d="M513 1125L687 1330V1371L513 1160Z" fill="#85ccf2" />
          <ellipse cx="1057" cy="566" rx="21" ry="55" transform="rotate(-10 1057 566)" fill="url(#bolt2)" />
          <ellipse cx="630" cy="1127" rx="37" ry="31" fill="url(#bolt)" />
          <ellipse cx="716" cy="1230" rx="37" ry="33" fill="url(#bolt)" />
        </g>
      </g>
      <g strokeWidth="3">
        <path d="M1778 751V718" stroke="#4d79b0" /><path d="M1778 705L1783.500 720H1772.500Z" fill="#4d79b0" />
        <path d="M1778 751L1810 737" stroke="#bb2c5e" /><path d="M1820 735L1809 745L1804 735Z" fill="#bb2c5e" />
        <path d="M1778 751L1757 737" stroke="#5d9f4b" /><path d="M1746 729L1763 732L1756 742Z" fill="#5d9f4b" />
      </g>
      <g fontSize="21.600" fill="#16181a">
        <text x="2125" y="214" textLength="318">Volume: Electric potential (V)</text>
        {AXIS_LABELS.map(([x, y, t], i) => <text key={i} x={x} y={y}>{t}</text>)}
      </g>
    </svg>
  );
}

function Graphics() {
  return (
    <section className="flex h-[769px] shrink-0 flex-col border-2 border-r-0 border-[#bfd8ec] bg-linear-to-b from-[#fbfcfe] via-[#f3f8fe] to-[#e7f1fb]">
      <div className="flex h-[52px] shrink-0 items-end border-b-2 border-[#dcdee0] bg-[#fbfcfe] pl-[6px]">
        <Tab active label="Graphics" className="w-[111px]" color="text-[#4286c6]" />
        <Tab label="Convergence Plot 1" close className="ml-[15px] w-[252px]" />
        <Tab label="Convergence Plot 2" close className="ml-[15px] w-[253px]" />
      </div>
      <div className="flex h-[55px] shrink-0 items-center pl-[13px]">
        {G_TOOLS.map(([w, n], i) => <span key={i} className={"flex shrink-0 items-center " + w}>{n}</span>)}
      </div>
      <Plot3D />
    </section>
  );
}

/* ---------- messages ---------- */

const LINES = [
  "COMSOL Multiphysics 6.0.0.405",
  "[Feb 19, 2024, 4:48 PM] Opened file: C:\\Program Files\\COMSOL\\COMSOL60\\Multiphysics_copy1\\applications",
  "[Feb 20, 2024, 8:12 PM] Complete mesh consists of 3752 domain elements, 2036 boundary elements, and",
  "[Feb 20, 2024, 8:13 PM] Complete mesh consists of 4884 domain elements, 2436 boundary elements, and",
  "[Feb 20, 2024, 8:22 PM] Number of degrees of freedom solved for: 17466 (plus 6516 internal DOFs).",
  "[Feb 20, 2024, 8:22 PM] Solution time (Study 1): 7 s.",
];

function Messages() {
  return (
    <section className="mt-[9px] flex min-h-0 flex-1 flex-col border-2 border-r-0 border-[#dfe1e4] bg-[#fbfcfe]">
      <div className="flex h-[52px] shrink-0 items-end border-b-2 border-[#dcdee0] pl-[6px]">
        <Tab active label="Messages" close className="w-[162px]" color="text-[#48659d]" />
        <Tab label="Progress" className="ml-[14px] w-[108px]" />
        <Tab label="Log" className="ml-[14px] w-[54px]" />
        <Tab label="Table" close className="ml-[15px] w-[106px]" />
      </div>
      <div className="flex h-[50px] shrink-0 items-center gap-[15px] pl-[16px]">
        <Broom />
        <span className="flex size-[34px] items-center justify-center rounded-[4px] border-2 border-[#3f87c8] bg-[#8fc1ec]">
          <Ic w={28} h={26}>
            <path d="M2 2H25V20H2Z" fill="#fff" stroke="#3a7fc0" strokeWidth="1.600" />
            <path d="M2 2H25V6H2Z" fill="#a9cdec" stroke="#3a7fc0" strokeWidth="1.400" />
            <path d="M9 12H27V24H9Z" fill="#eef6fd" stroke="#3a7fc0" strokeWidth="1.600" />
            <path d="M9 12L18 19L27 12M9 24L15 17M27 24L21 17" stroke="#3a7fc0" strokeWidth="1.300" />
          </Ic>
        </span>
      </div>
      <div className="ml-[6px] flex flex-1 flex-col border-t-2 border-l-2 border-[#dcdee0]">
        <div className="flex-1 overflow-hidden pl-[4px] leading-[27.1px] text-[#17191b]">
          {LINES.map((l) => <div key={l} className="whitespace-nowrap tracking-[-0.12px]">{l}</div>)}
        </div>
        <div className="flex h-[30px] shrink-0 bg-[#fdfdfd]">
          <div className="flex w-[31px] items-center justify-center bg-[#f8f8f9]"><Chev dir="left" /></div>
          <div className="w-[788px] bg-[#e5e6e7]" />
        </div>
      </div>
    </section>
  );
}

export default function App() {
  return (
    <div className="flex h-[1252px] w-[2606px] flex-col overflow-hidden bg-[#fafdfe] font-['Noto_Sans',sans-serif] text-[20.35px] leading-[1.3] text-[#151515]">
      <Ribbon />
      <div className="flex h-[40px] shrink-0 items-center border-b-2 border-[#d6d9db] bg-[#e9eced] pt-[3px] pl-[15px]">
        {MAIN_TOOLS.map(([w, n], i) => <span key={i} className={"flex shrink-0 items-center " + w}>{n}</span>)}
      </div>
      <div className="flex min-h-0 flex-1 pt-[7px] pl-[1px]">
        <ModelBuilder />
        <Settings />
        <div className="ml-[9px] flex min-w-0 flex-1 flex-col">
          <Graphics />
          <Messages />
        </div>
      </div>
    </div>
  );
}
